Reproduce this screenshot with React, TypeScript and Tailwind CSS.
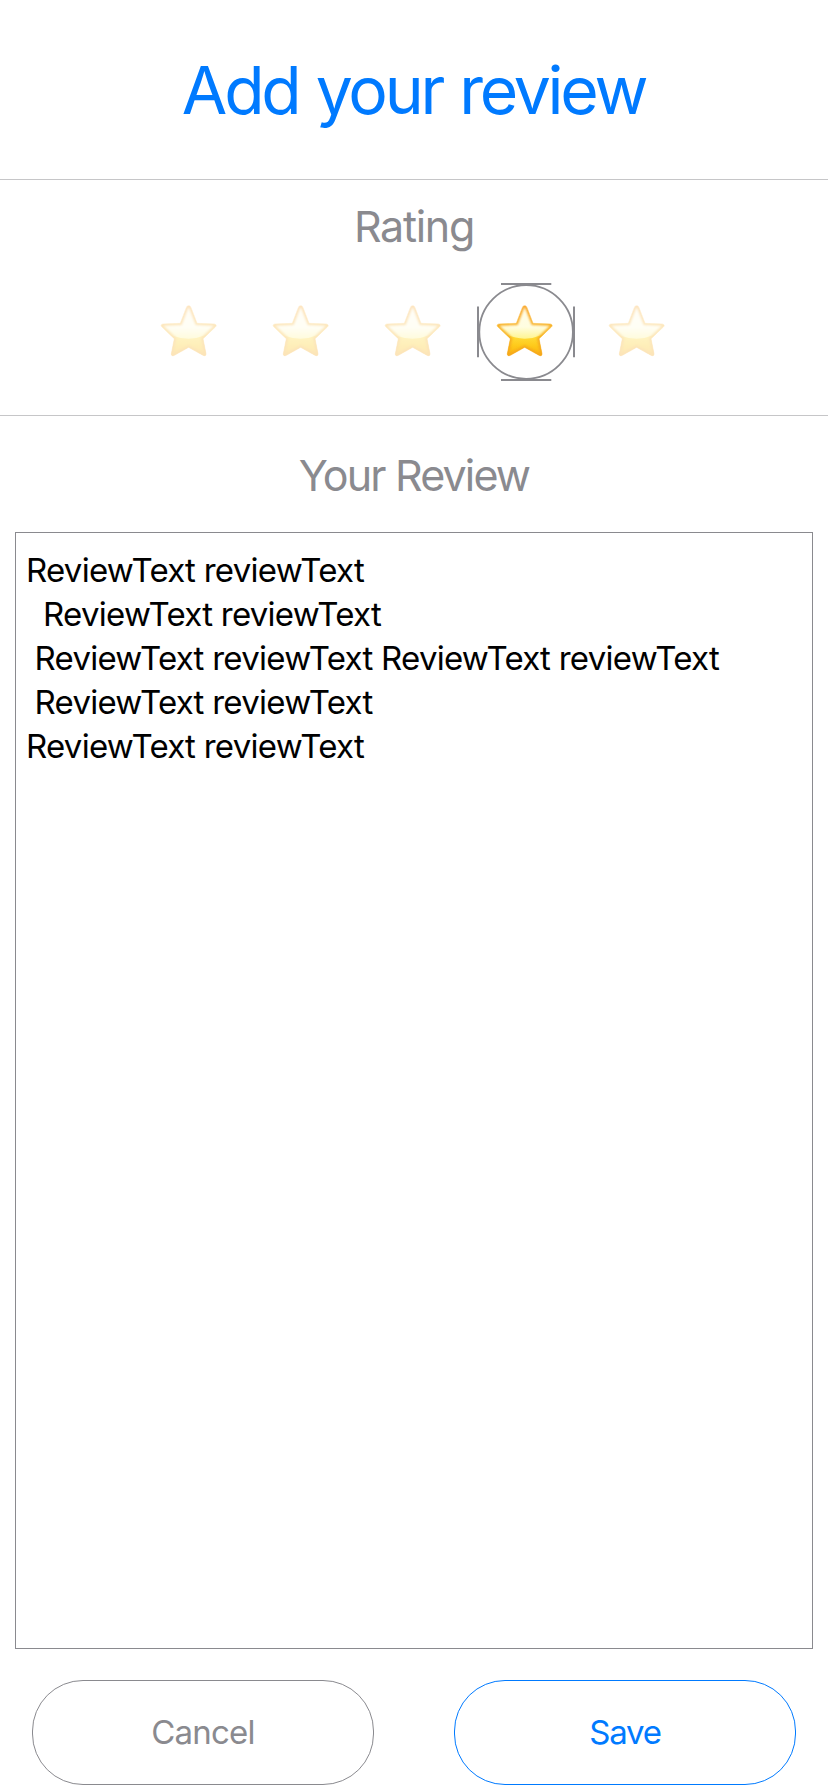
const STAR =
  "M104 32 C107.500 32 109.500 34 111 38 L129 85 L180 87 C187.500 87.500 188 93 184 96 L147 131 L156 176 C156.500 182.500 152 183.500 147 181 L104 157 L61 181 C56 183.500 51.500 182.500 52 176 L61 131 L24 96 C20 93 20.500 87.500 28 87 L79 85 L97 38 C98.500 34 100.500 32 104 32 Z";

function Star({ id, dim }: { id: number; dim: boolean }) {
  return (
    <svg viewBox="0 0 210 210" className={dim ? "size-[70px] opacity-30" : "size-[70px]"}>
      <defs>
        <linearGradient id={`fill${id}`} x1="0" y1="30" x2="0" y2="184" gradientUnits="userSpaceOnUse">
          <stop offset="0" stopColor="#fff3bd" />
          <stop offset="0.35" stopColor="#fff3a0" />
          <stop offset="0.6" stopColor="#ffdc38" />
          <stop offset="0.8" stopColor="#fec91a" />
          <stop offset="1" stopColor="#faac12" />
        </linearGradient>
        <linearGradient id={`gloss${id}`} x1="0" y1="40" x2="0" y2="133" gradientUnits="userSpaceOnUse">
          <stop offset="0" stopColor="#fffbe6" />
          <stop offset="0.6" stopColor="#fffde0" />
          <stop offset="1" stopColor="#fff48c" />
        </linearGradient>
        <linearGradient id={`edge${id}`} x1="0" y1="30" x2="0" y2="184" gradientUnits="userSpaceOnUse">
          <stop offset="0" stopColor="#f9a426" />
          <stop offset="0.5" stopColor="#f8b224" />
          <stop offset="1" stopColor="#f5a61c" />
        </linearGradient>
        <clipPath id={`clip${id}`}>
          <path d={STAR} />
        </clipPath>
        <filter id={`soft${id}`}>
          <feGaussianBlur stdDeviation="2.8" />
        </filter>
      </defs>
      <path d={STAR} fill={`url(#fill${id})`} stroke={`url(#edge${id})`} strokeWidth="1.500" strokeLinejoin="round" />
      <g clipPath={`url(#clip${id})`}>
        <path d="M20 30 H188 V96 Q160 129 104 131 Q48 129 20 96 Z" fill={`url(#gloss${id})`} />
        <path d={STAR} fill="none" stroke={`url(#edge${id})`} strokeWidth="11" filter={`url(#soft${id})`} />
      </g>
    </svg>
  );
}

function SelectedRing() {
  return (
    <svg viewBox="0 0 98 98" className="absolute left-[7px] top-0 size-[98px]" fill="none" stroke="#8a8a8f" strokeWidth="2">
      <path d="M24 1H74.300M24 97H74.300M1 23.500V74.300M97 23.500V74.300" />
      <circle cx="49.100" cy="49" r="46.800" strokeWidth="1.800" />
    </svg>
  );
}

const lines = [
  "ReviewText reviewText",
  "  ReviewText reviewText",
  " ReviewText reviewText ReviewText reviewText",
  " ReviewText reviewText",
  "ReviewText reviewText",
];

const stars = [1, 2, 3, 4, 5];
const rating = 4;

export default function App() {
  return (
    <main className="flex h-[1792px] w-[828px] flex-col bg-white font-['Inter',sans-serif] text-[#8a8a8f]">
      <header className="flex h-[180px] items-center justify-center border-b border-[#c6c6c8] pt-[1px]">
        <h1 className="pr-[1px] text-[66px] leading-[80px] tracking-[-3.250px] text-[#007aff] [word-spacing:2px]">
          Add your review
        </h1>
      </header>
      <section className="flex h-[236px] flex-col items-center border-b border-[#c6c6c8] pt-[19px]">
        <h2 className="text-[43px] leading-[54px] tracking-[-1.300px]">Rating</h2>
        <div className="mt-[30px] flex">
          {stars.map((n) => (
            <button key={n} className="relative flex h-[98px] w-[112px] justify-center pr-[2px] pt-[12px]">
              {n === rating && <SelectedRing />}
              <Star id={n} dim={n !== rating} />
            </button>
          ))}
        </div>
      </section>
      <section className="flex flex-col items-center pt-[32px]">
        <h2 className="text-[43px] leading-[54px] tracking-[-1.850px]">Your Review</h2>
        <div className="mt-[30px] h-[1117px] w-[798px] whitespace-pre border border-[#8a8a8f] px-[10px] py-[15px] text-[33px] leading-[44px] tracking-[-0.740px] text-black">
          {lines.map((line, i) => (
            <p key={i}>{line}</p>
          ))}
        </div>
      </section>
      <footer className="mt-[31px] flex justify-between px-[32px] text-[33px]">
        <button className="h-[105px] w-[342px] rounded-[51px] border border-[#8a8a8f] tracking-[-0.760px]">Cancel</button>
        <button className="h-[105px] w-[342px] rounded-[51px] border border-[#007aff] tracking-[-1.200px] text-[#007aff]">Save</button>
      </footer>
    </main>
  );
}
